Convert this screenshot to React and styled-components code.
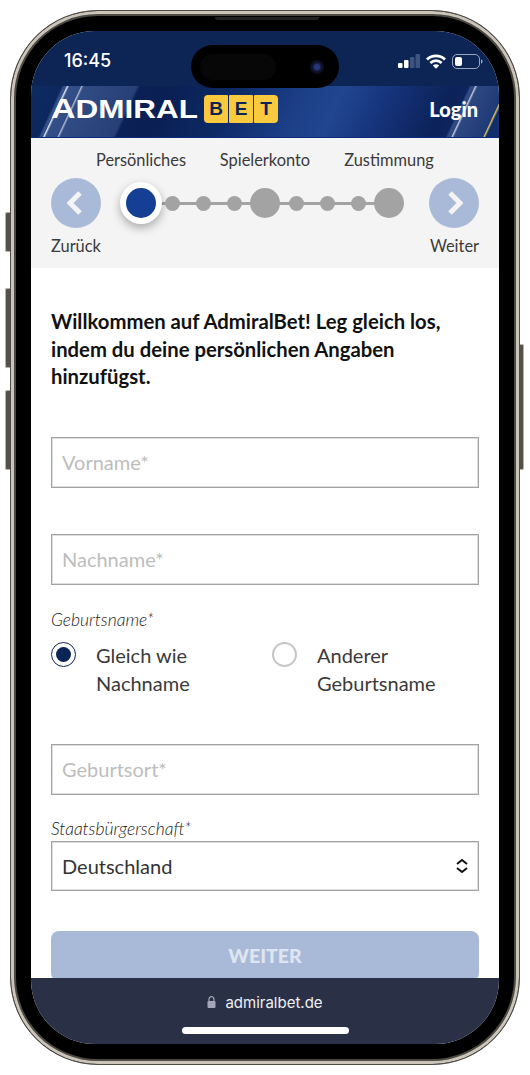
import React from "react";
import styled, { createGlobalStyle } from "styled-components";

const GlobalStyle = createGlobalStyle`
  * { box-sizing: border-box; }
  html, body { margin: 0; padding: 0; background: #fff; }
  body { font-family: "Lato", "Noto Sans", sans-serif; }
`;

const Page = styled.div`
  width: 530px;
  height: 1075px;
  padding: 10px;
  background: #fff;
  overflow: hidden;
`;

const Phone = styled.div`
  position: relative;
  width: 510px;
  height: 1055px;
  padding: 20px;
  border-radius: 88px;
  background: #000;
  border: 1px solid #4f4b45;
  box-shadow: inset 0 0 0 3px #cbc5b9, inset 0 0 0 5px #4c4842;
`;

const SideButton = styled.span`
  position: absolute;
  left: -6px;
  top: ${(props) => props.$top}px;
  width: 5px;
  height: ${(props) => props.$height}px;
  border-radius: 2px 0 0 2px;
  background: #55514a;
  border: 1px solid #b9b2a6;
  border-right: none;
`;

const PowerButton = styled(SideButton)`
  left: auto;
  right: -5px;
  width: 4px;
  border-radius: 0 2px 2px 0;
  border-left: none;
  border-right: 1px solid #b9b2a6;
`;

const Speaker = styled.span`
  position: absolute;
  top: 6px;
  left: 204px;
  width: 104px;
  height: 3px;
  border-radius: 0 0 3px 3px;
  background: #222;
`;

const Screen = styled.div`
  position: relative;
  display: flex;
  flex-direction: column;
  height: 1013px;
  border-radius: 64px;
  overflow: hidden;
  background: #fff;
`;

const Island = styled.div`
  position: absolute;
  top: 14px;
  left: 160px;
  width: 148px;
  height: 43px;
  padding: 0 15px 0 9px;
  display: flex;
  align-items: center;
  justify-content: space-between;
  border-radius: 22px;
  background: #000;
`;

const IslandGlass = styled.span`
  width: 76px;
  height: 26px;
  border-radius: 13px;
  background: #070707;
`;

const Camera = styled.span`
  width: 14px;
  height: 14px;
  border-radius: 50%;
  background: radial-gradient(circle, #24397c 0 22%, #0c1024 50%, #0a0a0e 100%);
`;

const StatusBar = styled.div`
  flex: none;
  height: 55px;
  padding: 20px 16px 0 33px;
  display: flex;
  justify-content: space-between;
  align-items: flex-start;
  background: #0d2555;
`;

const Clock = styled.span`
  font-family: "Inter", sans-serif;
  font-size: 18px;
  font-weight: 500;
  line-height: 20px;
  color: #fff;
`;

const StatusIcons = styled.div`
  display: flex;
  align-items: center;
  gap: 6px;
  height: 20px;
`;

const Header = styled.header`
  flex: none;
  height: 52px;
  padding: 0 20px 6px;
  display: flex;
  align-items: center;
  justify-content: space-between;
  border-bottom: 1px solid #0a2a80;
  background:
    linear-gradient(115deg, transparent 0 32px, rgba(255,255,255,.85) 33px, transparent 35px),
    linear-gradient(115deg, transparent 0 45px, rgba(255,255,255,.6) 46px, transparent 48px),
    linear-gradient(115deg, transparent 0 402px, rgba(255,255,255,.7) 403px, transparent 405px),
    linear-gradient(115deg, transparent 0 431px, rgba(246,208,90,.9) 432px, transparent 434px),
    linear-gradient(115deg, transparent 0 28px, rgba(130,160,220,.34) 30px, rgba(130,160,220,.24) 96px, transparent 99px),
    linear-gradient(115deg, transparent 0 397px, rgba(130,160,220,.3) 399px, rgba(130,160,220,.12) 432px, transparent 434px),
    linear-gradient(115deg, #0d2a62 0, #0a1f52 28%, #0d2a66 42%, #1c3f88 56%, #22458f 64%, #173680 72%, #0c2258 86%, #12306e 100%);
`;

const Logo = styled.div`
  display: flex;
  align-items: center;
  gap: 5px;
`;

const LogoWord = styled.span`
  display: inline-block;
  width: 148px;
  font-family: "Liberation Sans", sans-serif;
  font-size: 25px;
  font-weight: 700;
  line-height: 28px;
  white-space: nowrap;
  color: #fff;
  transform-origin: left center;
  transform: scaleX(1.26);
`;

const LogoInitial = styled.span`
  font-size: 27px;
`;

const LogoTiles = styled.div`
  display: flex;
  gap: 1px;
`;

const LogoTile = styled.span`
  width: 24px;
  height: 28px;
  display: flex;
  align-items: center;
  justify-content: center;
  font-family: "Liberation Sans", sans-serif;
  font-size: 19px;
  font-weight: 700;
  color: #0d2555;
  background: #f9c93e;
  border-radius: ${(props) => props.$radius || "1px"};
`;

const LoginLink = styled.span`
  margin-right: 1px;
  font-size: 20px;
  font-weight: 900;
  color: #fff;
`;

const Stepper = styled.section`
  flex: none;
  height: 130px;
  padding: 12px 20px 0;
  display: flex;
  flex-direction: column;
  background: #f4f4f4;
  color: #3a3a3a;
  font-size: 16.4px;
`;

const StepLabels = styled.div`
  display: flex;
  justify-content: center;
  height: 20px;
  line-height: 20px;
`;

const StepLabel = styled.span`
  width: 124px;
  text-align: center;
  white-space: nowrap;
`;

const StepperRow = styled.div`
  margin-top: 8px;
  display: flex;
  align-items: center;
  justify-content: space-between;
`;

const NavButton = styled.button`
  width: 50px;
  height: 50px;
  padding: 0;
  display: flex;
  align-items: center;
  justify-content: center;
  border: none;
  border-radius: 50%;
  background: #a9bad9;
`;

const Track = styled.div`
  position: relative;
  display: grid;
  grid-template-columns: repeat(9, 31px);
  align-items: center;
  justify-items: center;
  &::before {
    content: "";
    position: absolute;
    left: 15px;
    right: 15px;
    top: 50%;
    height: 3px;
    margin-top: -1.5px;
    background: #a3a3a3;
  }
`;

const Dot = styled.span`
  position: relative;
  width: ${(props) => (props.$large ? 30 : 15)}px;
  height: ${(props) => (props.$large ? 30 : 15)}px;
  border-radius: 50%;
  background: #a3a3a3;
`;

const ActiveDot = styled(Dot)`
  background: #143f94;
  box-shadow: 0 0 0 6px #fff, 0 4px 10px 6px rgba(0, 0, 0, 0.3);
`;

const NavLabels = styled.div`
  margin-top: 8px;
  display: flex;
  justify-content: space-between;
  line-height: 20px;
`;

const Form = styled.form`
  flex: 1;
  min-height: 0;
  padding: 40px 20px 0;
  display: flex;
  flex-direction: column;
  overflow: hidden;
  background: #fff;
`;

const Title = styled.h1`
  margin: 0 0 46px;
  font-size: 20.3px;
  font-weight: 700;
  line-height: 27.5px;
  color: #111;
`;

const Input = styled.input`
  flex: none;
  width: 100%;
  height: 51px;
  padding: 0 10px;
  margin-bottom: ${(props) => props.$gap || 0}px;
  border: 1px solid #a2a2a2;
  box-shadow: inset 0 0 0 1px #dedede;
  border-radius: 0;
  font-family: inherit;
  font-size: 20px;
  font-weight: 400;
  background: #fff;
  &::placeholder {
    color: #bdbdbd;
    opacity: 1;
  }
`;

const FieldLabel = styled.label`
  display: block;
  font-size: 17.5px;
  font-style: italic;
  font-weight: 300;
  line-height: 20px;
  color: #222;
`;

const RadioGroup = styled.div`
  margin: 11px 0 47px;
  display: grid;
  grid-template-columns: 221px 1fr;
`;

const RadioOption = styled.label`
  display: flex;
  gap: 20px;
  font-size: 20px;
  line-height: 28px;
  color: #3a3a3a;
`;

const RadioMark = styled.span`
  flex: none;
  margin-top: 1px;
  width: 25px;
  height: 25px;
  display: flex;
  align-items: center;
  justify-content: center;
  border-radius: 50%;
  border: ${(props) => (props.$checked ? "1px solid #0d2555" : "2px solid #c6c6c6")};
  background: #fff;
  &::after {
    content: "";
    width: 15px;
    height: 15px;
    border-radius: 50%;
    background: ${(props) => (props.$checked ? "#0d2555" : "transparent")};
  }
`;

const SelectWrap = styled.div`
  position: relative;
  flex: none;
  margin: 2px 0 40px;
`;

const Select = styled.select`
  appearance: none;
  width: 100%;
  height: 50px;
  padding: 0 10px;
  border: 1px solid #a2a2a2;
  box-shadow: inset 0 0 0 1px #dedede;
  border-radius: 0;
  background: #fff;
  font-family: inherit;
  font-size: 20px;
  color: #333;
`;

const SelectIcon = styled.svg`
  position: absolute;
  right: 10px;
  top: 17px;
  pointer-events: none;
`;

const SubmitButton = styled.button`
  flex: none;
  width: 100%;
  height: 50px;
  border: none;
  border-radius: 8px;
  background: #a9bad9;
  font-family: inherit;
  font-size: 19.5px;
  font-weight: 900;
  color: #dfe5f1;
`;

const UrlBar = styled.footer`
  flex: none;
  height: 66px;
  padding-top: 14px;
  display: flex;
  flex-direction: column;
  align-items: center;
  background: #2a3146;
`;

const UrlLine = styled.div`
  display: flex;
  align-items: center;
  gap: 9px;
  height: 20px;
  font-family: "Inter", sans-serif;
  font-size: 15px;
  color: #eef0f5;
`;

const HomeBar = styled.span`
  margin-top: 15px;
  width: 167px;
  height: 7px;
  border-radius: 4px;
  background: #fff;
`;

const ChevronIcon = ({ flip }) => (
  <svg width="18" height="26" viewBox="0 0 18 26" fill="none">
    <path
      d={flip ? "M5 3l10 10L5 23" : "M13 3L3 13l10 10"}
      stroke="#f4f4f4"
      strokeWidth="5"
    />
  </svg>
);

const SignalIcon = () => (
  <svg width="22" height="14" viewBox="0 0 22 14">
    <rect x="0" y="9" width="4.500" height="5" rx="1" fill="#fff" />
    <rect x="6" y="6" width="4.500" height="8" rx="1" fill="#fff" />
    <rect x="12" y="3" width="4.500" height="11" rx="1" fill="#3d5480" />
    <rect x="17.500" y="0" width="4.500" height="14" rx="1" fill="#3d5480" />
  </svg>
);

const WifiIcon = () => (
  <svg width="20" height="15" viewBox="0 0 20 15" fill="none" stroke="#fff" strokeWidth="2.800">
    <path d="M1 5.500a13 13 0 0 1 18 0" />
    <path d="M4.400 9a8 8 0 0 1 11.200 0" />
    <path d="M10 14.800l-3.200-3.200a4.500 4.500 0 0 1 6.400 0z" fill="#fff" stroke="none" />
  </svg>
);

const BatteryIcon = () => (
  <svg width="31" height="15" viewBox="0 0 31 15" fill="none">
    <rect x="0.500" y="0.500" width="27" height="14" rx="4.500" stroke="#9aa6c0" />
    <rect x="3" y="3" width="7" height="9" rx="2" fill="#fff" />
    <path d="M29 5.500v4c1-.3 1.600-1.100 1.600-2S30 5.800 29 5.500z" fill="#9aa6c0" />
  </svg>
);

const LockIcon = () => (
  <svg width="9" height="12" viewBox="0 0 9 12">
    <path d="M2 5V3.200a2.500 2.500 0 0 1 5 0V5" fill="none" stroke="#a2a6b8" strokeWidth="1.200" />
    <rect x="0.500" y="5" width="8" height="7" rx="1.200" fill="#a2a6b8" />
  </svg>
);

const App = () => {
  return (
    <Page>
      <GlobalStyle />
      <Phone>
        <SideButton $top={201} $height={40} />
        <SideButton $top={277} $height={80} />
        <SideButton $top={379} $height={80} />
        <PowerButton $top={333} $height={126} />
        <Speaker />
        <Screen>
          <Island>
            <IslandGlass />
            <Camera />
          </Island>
          <StatusBar>
            <Clock>16:45</Clock>
            <StatusIcons>
              <SignalIcon />
              <WifiIcon />
              <BatteryIcon />
            </StatusIcons>
          </StatusBar>
          <Header>
            <Logo>
              <LogoWord>
                <LogoInitial>A</LogoInitial>DMIRAL
              </LogoWord>
              <LogoTiles>
                <LogoTile $radius="4px 1px 1px 4px">B</LogoTile>
                <LogoTile>E</LogoTile>
                <LogoTile $radius="1px 4px 4px 1px">T</LogoTile>
              </LogoTiles>
            </Logo>
            <LoginLink>Login</LoginLink>
          </Header>
          <Stepper>
            <StepLabels>
              <StepLabel>Persönliches</StepLabel>
              <StepLabel>Spielerkonto</StepLabel>
              <StepLabel>Zustimmung</StepLabel>
            </StepLabels>
            <StepperRow>
              <NavButton type="button" aria-label="Zurück">
                <ChevronIcon />
              </NavButton>
              <Track>
                <ActiveDot $large />
                <Dot />
                <Dot />
                <Dot />
                <Dot $large />
                <Dot />
                <Dot />
                <Dot />
                <Dot $large />
              </Track>
              <NavButton type="button" aria-label="Weiter">
                <ChevronIcon flip />
              </NavButton>
            </StepperRow>
            <NavLabels>
              <span>Zurück</span>
              <span>Weiter</span>
            </NavLabels>
          </Stepper>
          <Form>
            <Title>
              Willkommen auf AdmiralBet! Leg gleich los, indem du deine persönlichen Angaben
              hinzufügst.
            </Title>
            <Input placeholder="Vorname*" $gap={46} />
            <Input placeholder="Nachname*" $gap={25} />
            <FieldLabel>Geburtsname*</FieldLabel>
            <RadioGroup>
              <RadioOption>
                <RadioMark $checked />
                <span>
                  Gleich wie
                  <br />
                  Nachname
                </span>
              </RadioOption>
              <RadioOption>
                <RadioMark />
                <span>
                  Anderer
                  <br />
                  Geburtsname
                </span>
              </RadioOption>
            </RadioGroup>
            <Input placeholder="Geburtsort*" $gap={24} />
            <FieldLabel>Staatsbürgerschaft*</FieldLabel>
            <SelectWrap>
              <Select defaultValue="Deutschland">
                <option>Deutschland</option>
              </Select>
              <SelectIcon width="14" height="16" viewBox="0 0 14 16" fill="none" stroke="#111" strokeWidth="2">
                <path d="M2 6l5-4 5 4" />
                <path d="M2 10l5 4 5-4" />
              </SelectIcon>
            </SelectWrap>
            <SubmitButton type="button">WEITER</SubmitButton>
          </Form>
          <UrlBar>
            <UrlLine>
              <LockIcon />
              admiralbet.de
            </UrlLine>
            <HomeBar />
          </UrlBar>
        </Screen>
      </Phone>
    </Page>
  );
};

export default App;
